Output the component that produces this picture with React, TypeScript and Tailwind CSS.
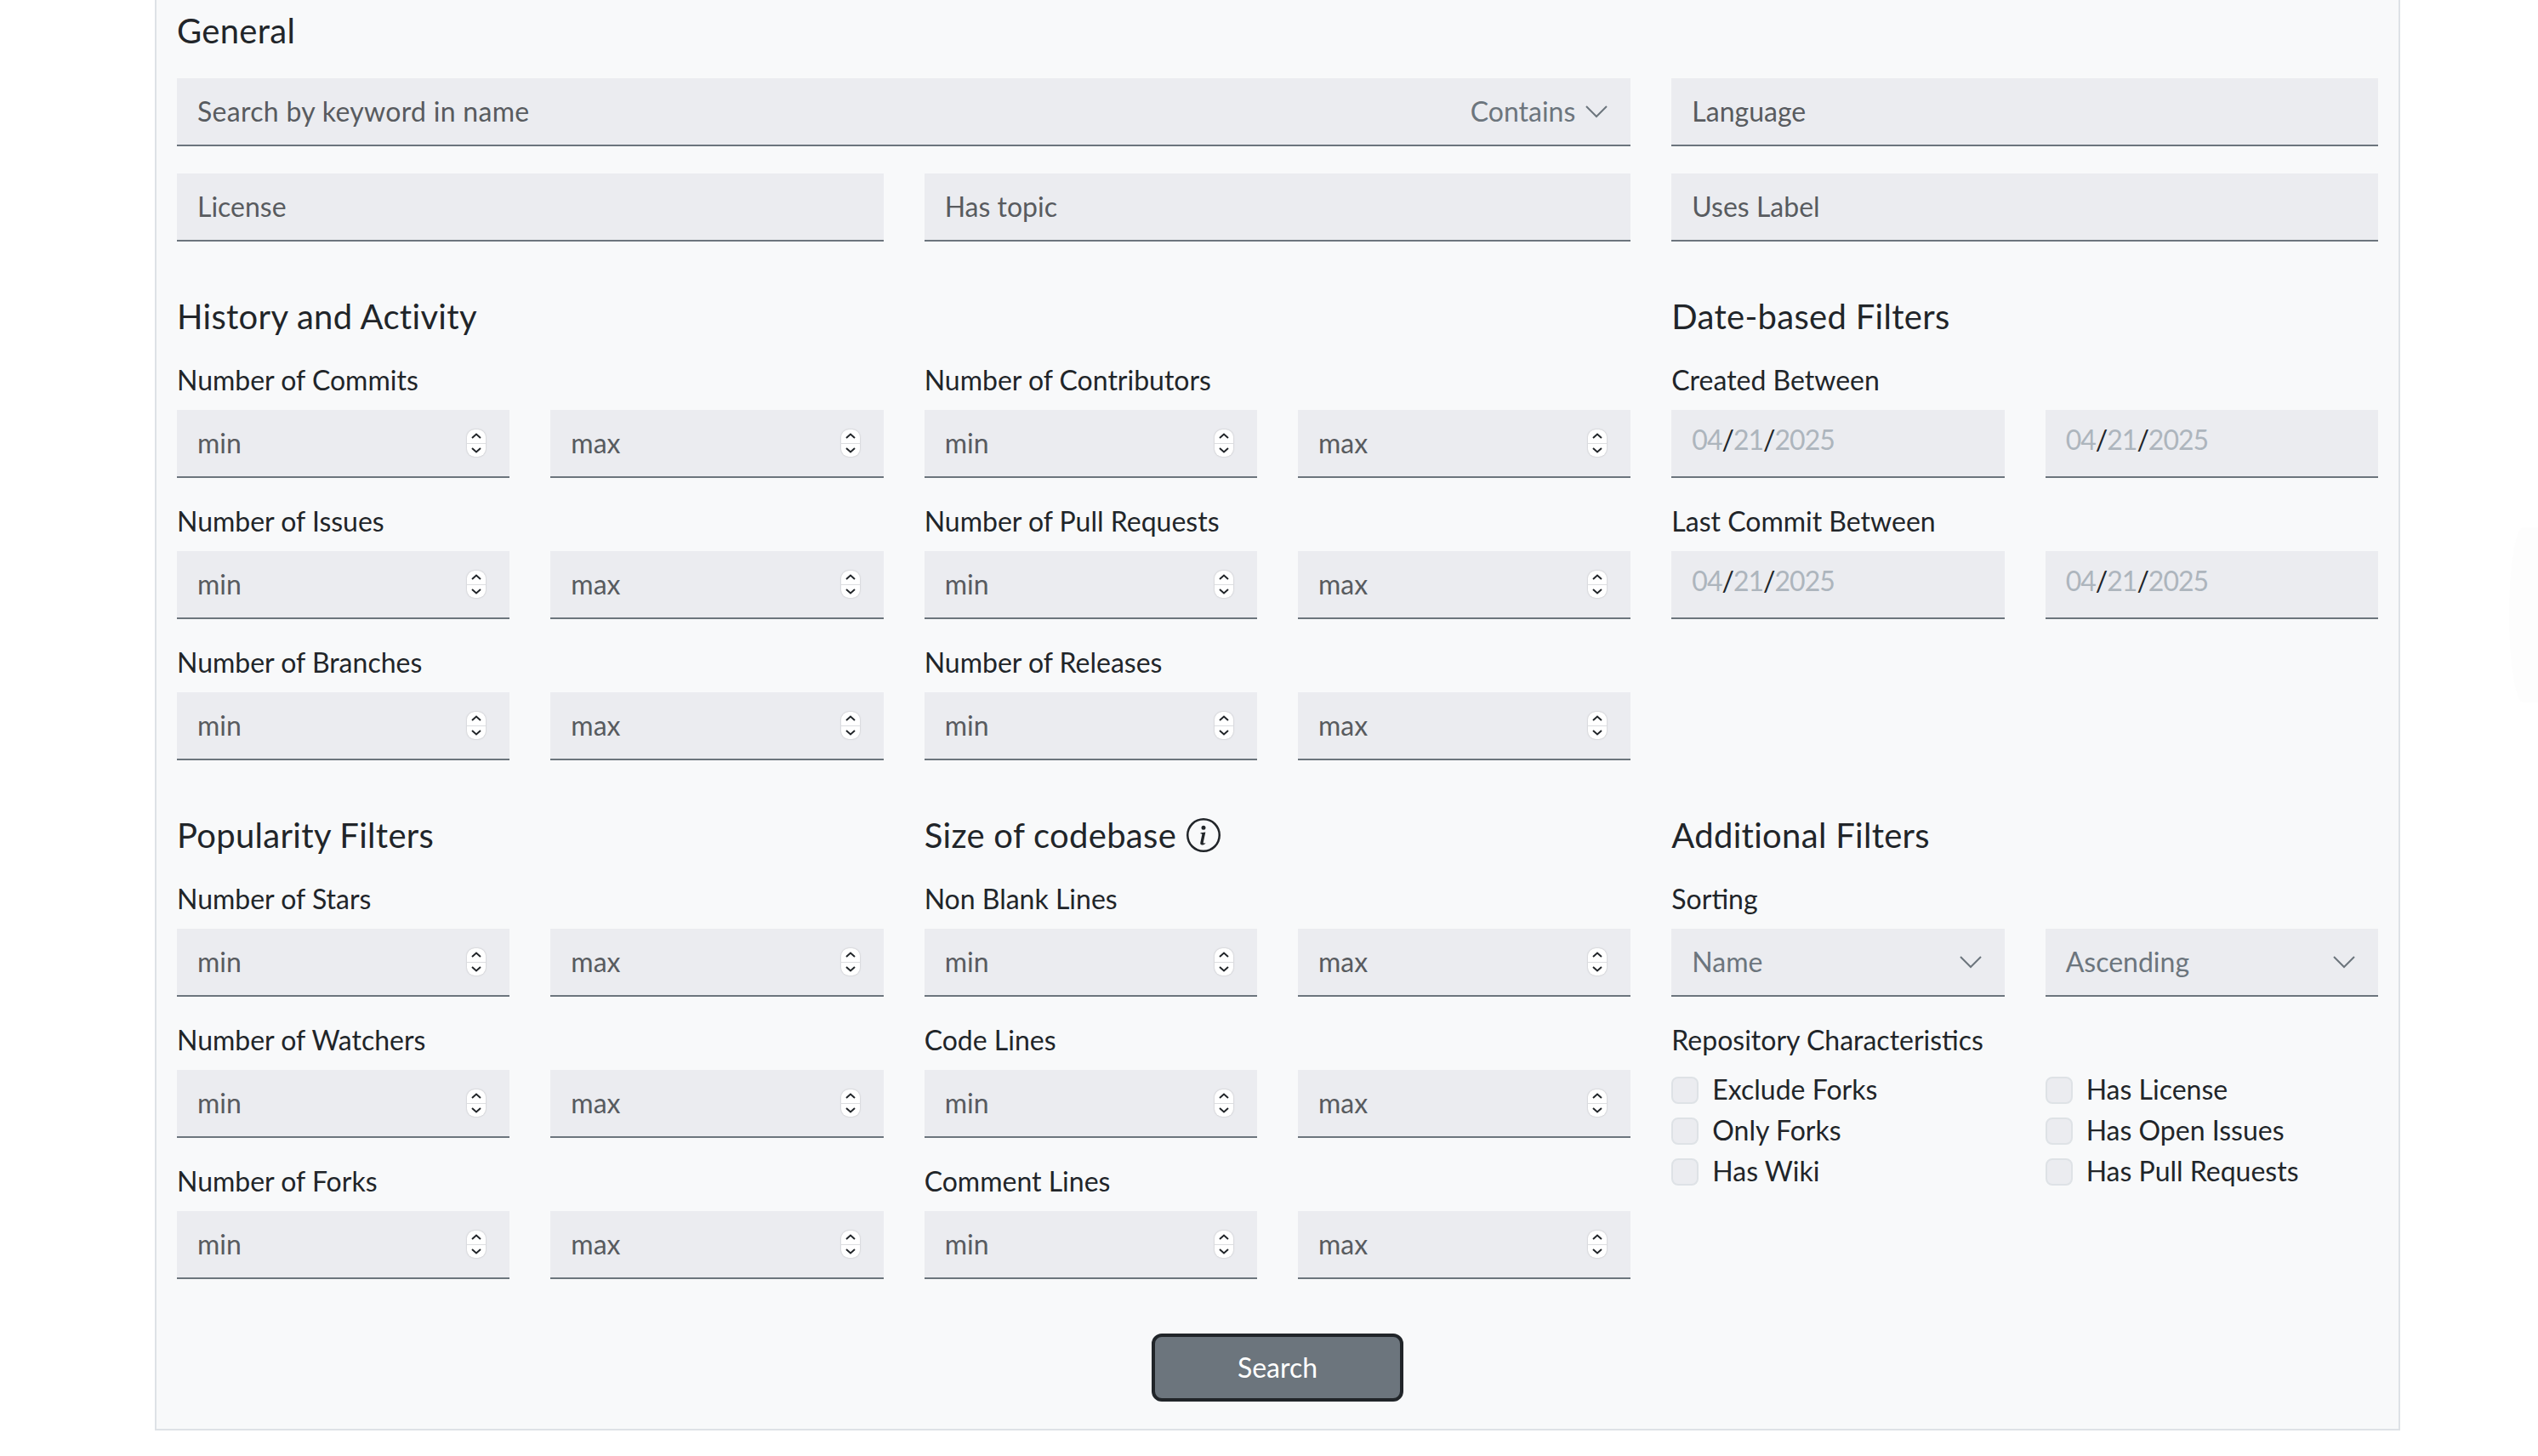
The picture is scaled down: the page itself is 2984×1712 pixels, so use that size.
import React from 'react';

const font = "font-['Lato',sans-serif]";

const Chevron = ({ className }: { className: string }) => (
  <svg viewBox="0 0 26 15" fill="none" className={className}>
    <path d="M1 1l12 12L25 1" stroke="#6c757d" strokeWidth="2" />
  </svg>
);

const Stepper = () => (
  <div className="flex h-8 w-[22px] flex-col overflow-hidden rounded-[9px] bg-white shadow-[0_0_2px_rgba(0,0,0,0.25)]">
    <div className="flex flex-1 items-center justify-center border-b border-[#dcdde0]">
      <svg viewBox="0 0 12 7" className="h-[7px] w-3" fill="none">
        <path d="M1 6l5-4.5L11 6" stroke="#212529" strokeWidth="2" />
      </svg>
    </div>
    <div className="flex flex-1 items-center justify-center">
      <svg viewBox="0 0 12 7" className="h-[7px] w-3" fill="none">
        <path d="M1 1l5 4.5L11 1" stroke="#212529" strokeWidth="2" />
      </svg>
    </div>
  </div>
);

const TextInput = ({ placeholder }: { placeholder: string }) => (
  <div className="flex h-20 items-center border-b-2 border-[#6c757d] bg-[#ebecf0] px-6 text-[#585b5f]">
    {placeholder}
  </div>
);

const NumberInput = ({ placeholder }: { placeholder: string }) => (
  <div className="flex h-20 items-center justify-between border-b-2 border-[#6c757d] bg-[#ebecf0] pl-6 pr-7 text-[#585b5f]">
    <span>{placeholder}</span>
    <Stepper />
  </div>
);

const DateInput = () => (
  <div className="flex h-20 items-center border-b-2 border-[#6c757d] bg-[#ebecf0] px-6 pb-[9px] tracking-[-1px] text-[#adb5bd]">
    <span>04</span>
    <span className="text-[#212529]">/</span>
    <span>21</span>
    <span className="text-[#212529]">/</span>
    <span>2025</span>
  </div>
);

const SelectInput = ({ value }: { value: string }) => (
  <div className="flex h-20 items-center justify-between border-b-2 border-[#6c757d] bg-[#ebecf0] pl-6 pr-[27px] text-[#6c757d]">
    <span>{value}</span>
    <Chevron className="h-[15px] w-[26px]" />
  </div>
);

const Heading = ({ children }: { children: React.ReactNode }) => (
  <h5 className="mb-[27px] flex h-12 items-center gap-3 text-[40px] leading-[48px] tracking-[0.3px] text-[#212529]">{children}</h5>
);

const Label = ({ children }: { children: React.ReactNode }) => (
  <div className="mb-[11px] h-12 leading-[48px] text-[#212529]">{children}</div>
);

const Pair = ({ label, children }: { label: string; children: React.ReactNode }) => (
  <div className="mb-[27px] last:mb-0">
    <Label>{label}</Label>
    <div className="grid grid-cols-2 gap-x-12">{children}</div>
  </div>
);

const MinMax = ({ label }: { label: string }) => (
  <Pair label={label}>
    <NumberInput placeholder="min" />
    <NumberInput placeholder="max" />
  </Pair>
);

const Check = ({ label }: { label: string }) => (
  <div className="flex h-12 items-center gap-4 text-[#212529]">
    <div className="h-8 w-8 rounded-lg border-2 border-[#dee2e6] bg-[#ebecf0]" />
    <span className="-translate-y-px">{label}</span>
  </div>
);

export default function App() {
  return (
    <div className={`relative h-[1712px] overflow-hidden bg-white pl-[182px] pr-[162px] text-[32px] ${font}`}>
      <div className="border-x-2 border-b-2 border-[#dee2e6] bg-[#f8f9fa] px-6 pb-8 pt-3">
        <Heading>General</Heading>
        <div className="mt-[32px] grid grid-cols-3 gap-x-12 gap-y-8">
          <div className="col-span-2 flex h-20 items-center justify-between border-b-2 border-[#6c757d] bg-[#ebecf0] pl-6 pr-[27px] text-[#585b5f]">
            <span className="tracking-[0.3px]">Search by keyword in name</span>
            <span className="flex items-center gap-3 text-[#6c757d]">
              Contains
              <Chevron className="h-[15px] w-[26px]" />
            </span>
          </div>
          <TextInput placeholder="Language" />
          <TextInput placeholder="License" />
          <TextInput placeholder="Has topic" />
          <TextInput placeholder="Uses Label" />
        </div>

        <div className="mt-16 grid grid-cols-3 gap-x-12">
          <div>
            <Heading>History and Activity</Heading>
            <MinMax label="Number of Commits" />
            <MinMax label="Number of Issues" />
            <MinMax label="Number of Branches" />
          </div>
          <div>
            <Heading>{'\u00a0'}</Heading>
            <MinMax label="Number of Contributors" />
            <MinMax label="Number of Pull Requests" />
            <MinMax label="Number of Releases" />
          </div>
          <div>
            <Heading>Date-based Filters</Heading>
            <Pair label="Created Between">
              <DateInput />
              <DateInput />
            </Pair>
            <Pair label="Last Commit Between">
              <DateInput />
              <DateInput />
            </Pair>
          </div>
        </div>

        <div className="mt-16 grid grid-cols-3 gap-x-12">
          <div>
            <Heading>Popularity Filters</Heading>
            <MinMax label="Number of Stars" />
            <MinMax label="Number of Watchers" />
            <MinMax label="Number of Forks" />
          </div>
          <div>
            <Heading>
              Size of codebase
              <svg viewBox="0 0 16 16" className="h-10 w-10" fill="#212529">
                <path d="M8 15A7 7 0 1 1 8 1a7 7 0 0 1 0 14m0 1A8 8 0 1 0 8 0a8 8 0 0 0 0 16" />
                <path d="m8.93 6.588-2.29.287-.082.38.45.083c.294.07.352.176.288.469l-.738 3.468c-.194.897.105 1.319.808 1.319.545 0 1.178-.252 1.465-.598l.088-.42c-.2.176-.492.246-.686.246-.275 0-.375-.193-.304-.533zM9 4.5a1 1 0 1 1-2 0 1 1 0 0 1 2 0" />
              </svg>
            </Heading>
            <MinMax label="Non Blank Lines" />
            <MinMax label="Code Lines" />
            <MinMax label="Comment Lines" />
          </div>
          <div>
            <Heading>Additional Filters</Heading>
            <Pair label="Sorting">
              <SelectInput value="Name" />
              <SelectInput value="Ascending" />
            </Pair>
            <Label>Repository Characteristics</Label>
            <div className="grid grid-cols-2 gap-x-12">
              <Check label="Exclude Forks" />
              <Check label="Has License" />
              <Check label="Only Forks" />
              <Check label="Has Open Issues" />
              <Check label="Has Wiki" />
              <Check label="Has Pull Requests" />
            </div>
          </div>
        </div>

        <div className="mt-16 flex justify-center">
          <button className="h-20 w-[296px] rounded-xl border-4 border-[#212529] bg-[#6c757d] text-white">
            Search
          </button>
        </div>
      </div>
      <div className="absolute right-0 top-[620px] h-[206px] w-[34px] rounded-l-[100%] bg-[#fdfdfd]" />
    </div>
  );
}
